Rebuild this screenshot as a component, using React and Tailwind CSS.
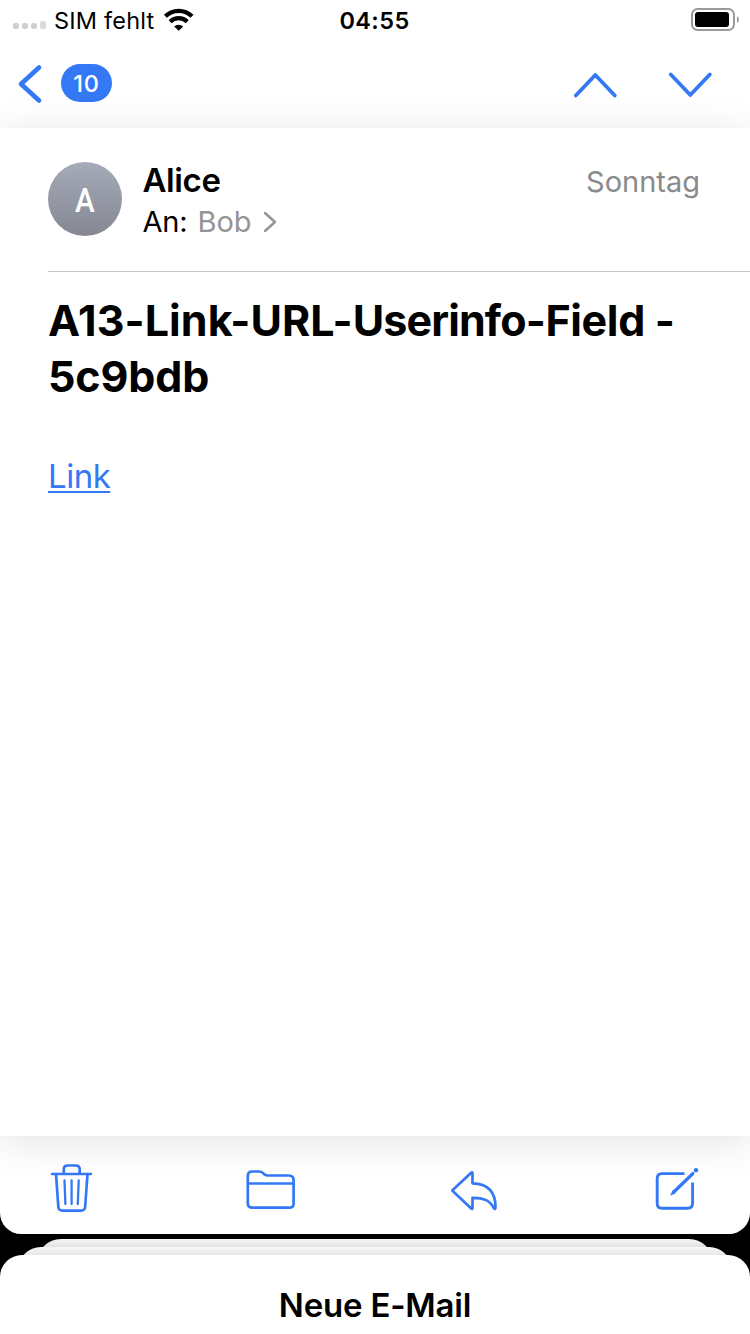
function StatusBar() {
  return (
    <div className="flex h-10 items-center justify-between pl-[13px] pr-[11px]">
      <div className="flex w-[300px] items-center">
        <svg width="34" height="10" viewBox="0 0 34 10" className="mt-3">
          <rect x="0" y="2" width="6" height="6" rx="2" fill="#cfcfcf" />
          <rect x="9" y="2" width="6" height="6" rx="2" fill="#cfcfcf" />
          <rect x="18" y="2" width="6" height="6" rx="2" fill="#cfcfcf" />
          <rect x="27" y="0" width="6" height="8" rx="2" fill="#d9d9d9" />
        </svg>
        <span className="ml-[7px] w-[101px] whitespace-nowrap pt-0.5 text-[23.5px] leading-10 tracking-[0.2px]">SIM fehlt</span>
        <svg width="32" height="24" viewBox="0 0 32 24" className="ml-2">
          <path d="M2.4 8.3A19 19 0 0 1 29 8.3" fill="none" stroke="#000" strokeWidth="4.4" />
          <path d="M7.2 13.7A12 12 0 0 1 24.2 13.7" fill="none" stroke="#000" strokeWidth="4.2" />
          <path d="M11.2 18.4A6.8 6.8 0 0 1 20.2 18.4L15.7 22.8Z" fill="#000" />
        </svg>
      </div>
      <span className="mr-[3px] pt-0.5 text-[23.5px] font-semibold leading-10 tracking-[0.4px]">04:55</span>
      <div className="flex w-[300px] justify-end">
        <svg width="48" height="24" viewBox="0 0 48 24">
          <rect x="1" y="1" width="42" height="21" rx="5.5" fill="none" stroke="#9b9b9b" strokeWidth="2" />
          <rect x="4" y="4" width="34" height="15" rx="3" fill="#000" />
          <path d="M46 8Q48 9.5 48 11.5T46 15Z" fill="#9b9b9b" />
        </svg>
      </div>
    </div>
  );
}

function NavBar() {
  return (
    <div className="flex h-[88px] items-start justify-between pl-4 pr-9 pt-6">
      <div className="flex items-start">
        <svg width="28" height="40" viewBox="0 0 28 40" className="stroke-[#3478f6]">
          <path d="M23 3.5L5 20L23 36.5" fill="none" strokeWidth="4.6" strokeLinecap="round" strokeLinejoin="round" />
        </svg>
        <span className="ml-[17px] flex h-[38px] w-[51px] items-center justify-center rounded-full bg-[#3478f6] pt-0.5 text-[23.5px] font-[450] leading-none tracking-[0.7px] text-white">10</span>
      </div>
      <div className="flex gap-[47px]">
        <svg width="48" height="40" viewBox="0 0 48 40" className="stroke-[#3478f6]">
          <path d="M4.8 31.5L24.3 11L43.8 31.5" fill="none" strokeWidth="3.8" strokeLinecap="round" strokeLinejoin="round" />
        </svg>
        <svg width="48" height="40" viewBox="0 0 48 40" className="stroke-[#3478f6]">
          <path d="M4.8 10.5L24.3 31L43.8 10.5" fill="none" strokeWidth="3.8" strokeLinecap="round" strokeLinejoin="round" />
        </svg>
      </div>
    </div>
  );
}

function Message() {
  return (
    <main className="relative h-[1008px] bg-white pl-12 shadow-[0_6px_38px_rgba(0,0,0,0.115)]">
      <div className="flex h-36 items-start border-b border-[#c6c6c8] pt-[34px]">
        <div className="flex size-[74px] items-center justify-center rounded-full bg-linear-to-b from-[#a6abb9] to-[#858892] pr-px pt-[3px] text-[33px] font-medium leading-none text-white">
          <span className="inline-block scale-x-90 font-[Roboto,sans-serif]">A</span>
        </div>
        <div className="-mt-px ml-[20.5px] flex-1">
          <div className="text-[33px] font-semibold leading-[38px] tracking-[-0.4px]">Alice</div>
          <div className="mt-0.5 flex items-center text-[29px] leading-[42px]">
            <span className="tracking-[-0.2px]">An:</span>
            <span className="ml-[10px] text-[#949494]">Bob</span>
            <svg width="14" height="24" viewBox="0 0 14 24" className="ml-[11px]">
              <path d="M2 3L12 12L2 21" fill="none" stroke="#949494" strokeWidth="2.4" strokeLinecap="round" strokeLinejoin="round" />
            </svg>
          </div>
        </div>
        <div className="mr-[50px] text-[29px] leading-[40px] text-[#8a8a8a]">Sonntag</div>
      </div>
      <h1 className="mt-5 w-[660px] text-[43px] font-bold leading-[56px]">
        <span className="tracking-[0.08px]">A13-Link-URL-</span>
        <span className="tracking-[-0.88px]">Userinfo</span>
        <span className="tracking-[-0.35px]">-Field - </span>
        <span className="tracking-[-0.15px]">5c9bdb</span>
      </h1>
      <a className="mt-[52px] inline-block text-[33px] font-normal leading-10 tracking-[-0.5px] text-[#3478f6] underline decoration-2 underline-offset-[3px]">Link</a>
    </main>
  );
}

function Toolbar() {
  return (
    <div className="flex h-[98px] items-start justify-between px-12 pt-6">
      <svg width="48" height="56" viewBox="48 1160 48 56" fill="none" strokeLinecap="round" strokeLinejoin="round" className="stroke-[#3478f6]">
        <path d="M52.2 1174H90.8" strokeWidth="2.7" />
        <path d="M63.8 1173V1169.5Q63.8 1165.5 67.8 1165.5H75.7Q79.7 1165.5 79.7 1169.5V1173" strokeWidth="2.7" />
        <path d="M56 1174L58.3 1206.5Q58.6 1210.6 62.5 1210.6H81Q84.9 1210.6 85.2 1206.5L87.5 1174" strokeWidth="2.7" />
        <path d="M64.5 1180.5L65.4 1204M71.6 1180.5V1204M78.7 1180.5L77.8 1204" strokeWidth="2.3" />
      </svg>
      <svg width="52" height="56" viewBox="247.7 1160 52 56" fill="none" strokeLinecap="round" strokeLinejoin="round" className="overflow-visible stroke-[#3478f6]">
        <path d="M248.5 1183.5V1176Q248.5 1171.5 253 1171.5H259.5Q262 1171.5 263.7 1173L265 1174.2Q266.6 1175.5 269 1175.5H289.5Q294.3 1175.5 294.3 1180.3V1203.5Q294.3 1207.7 290 1207.7H253Q248.5 1207.7 248.5 1203.3Z" strokeWidth="2.7" />
        <path d="M249 1183.5H294" strokeWidth="2.4" />
      </svg>
      <svg width="52" height="56" viewBox="451 1160 52 56" fill="none" strokeLinecap="round" strokeLinejoin="round" className="overflow-visible stroke-[#3478f6]">
        <path d="M452.2 1190.5L471.2 1172.7Q472.5 1171.7 472.5 1173.4V1183.3C488 1183.3 495.7 1192.5 495.5 1207.5Q495.5 1209.8 494 1208.5C490 1200.5 484 1197.8 472.5 1197.8V1207.8Q472.5 1209.5 471.2 1208.5Z" strokeWidth="2.7" />
      </svg>
      <svg width="48" height="56" viewBox="654 1160 48 56" fill="none" className="stroke-[#3478f6]">
        <path d="M684.5 1173.6H662Q657.2 1173.6 657.2 1178.4V1203.5Q657.2 1208.3 662 1208.3H687.5Q692.6 1208.3 692.6 1203V1182.5" strokeWidth="2.9" />
        <path d="M692.8 1173.6L673.8 1192" strokeWidth="3.4" strokeLinecap="round" />
        <path d="M672.8 1190.6L670.6 1195.2L675.2 1193.2Z" fill="#3478f6" strokeWidth="0.6" strokeLinejoin="round" />
        <circle cx="696" cy="1170.3" r="2.2" fill="#3478f6" stroke="none" />
      </svg>
    </div>
  );
}

function DraftStack() {
  return (
    <div className="mt-[5px] flex flex-col items-stretch">
      <div className="mx-[37px] h-7 rounded-t-[24px] bg-linear-to-b from-[#f6f6f6] to-[#e2e2e2] to-[8px]" />
      <div className="relative mx-[18px] -mt-5 h-7 rounded-t-[23px] bg-linear-to-b from-[#f8f8f8] to-[#e6e6e6] to-[8px]" />
      <div className="relative -mt-5 flex h-[79px] justify-center rounded-t-[22px] bg-white pt-[30px] text-[33px] font-semibold leading-10">
        <span className="tracking-[-0.2px]">Neue E-Mail</span>
      </div>
    </div>
  );
}

export default function App() {
  return (
    <div className="h-[1334px] w-[750px] overflow-hidden bg-black font-[Inter,sans-serif] text-black">
      <div className="overflow-hidden rounded-b-[21px] bg-white">
        <StatusBar />
        <NavBar />
        <Message />
        <Toolbar />
      </div>
      <DraftStack />
    </div>
  );
}
